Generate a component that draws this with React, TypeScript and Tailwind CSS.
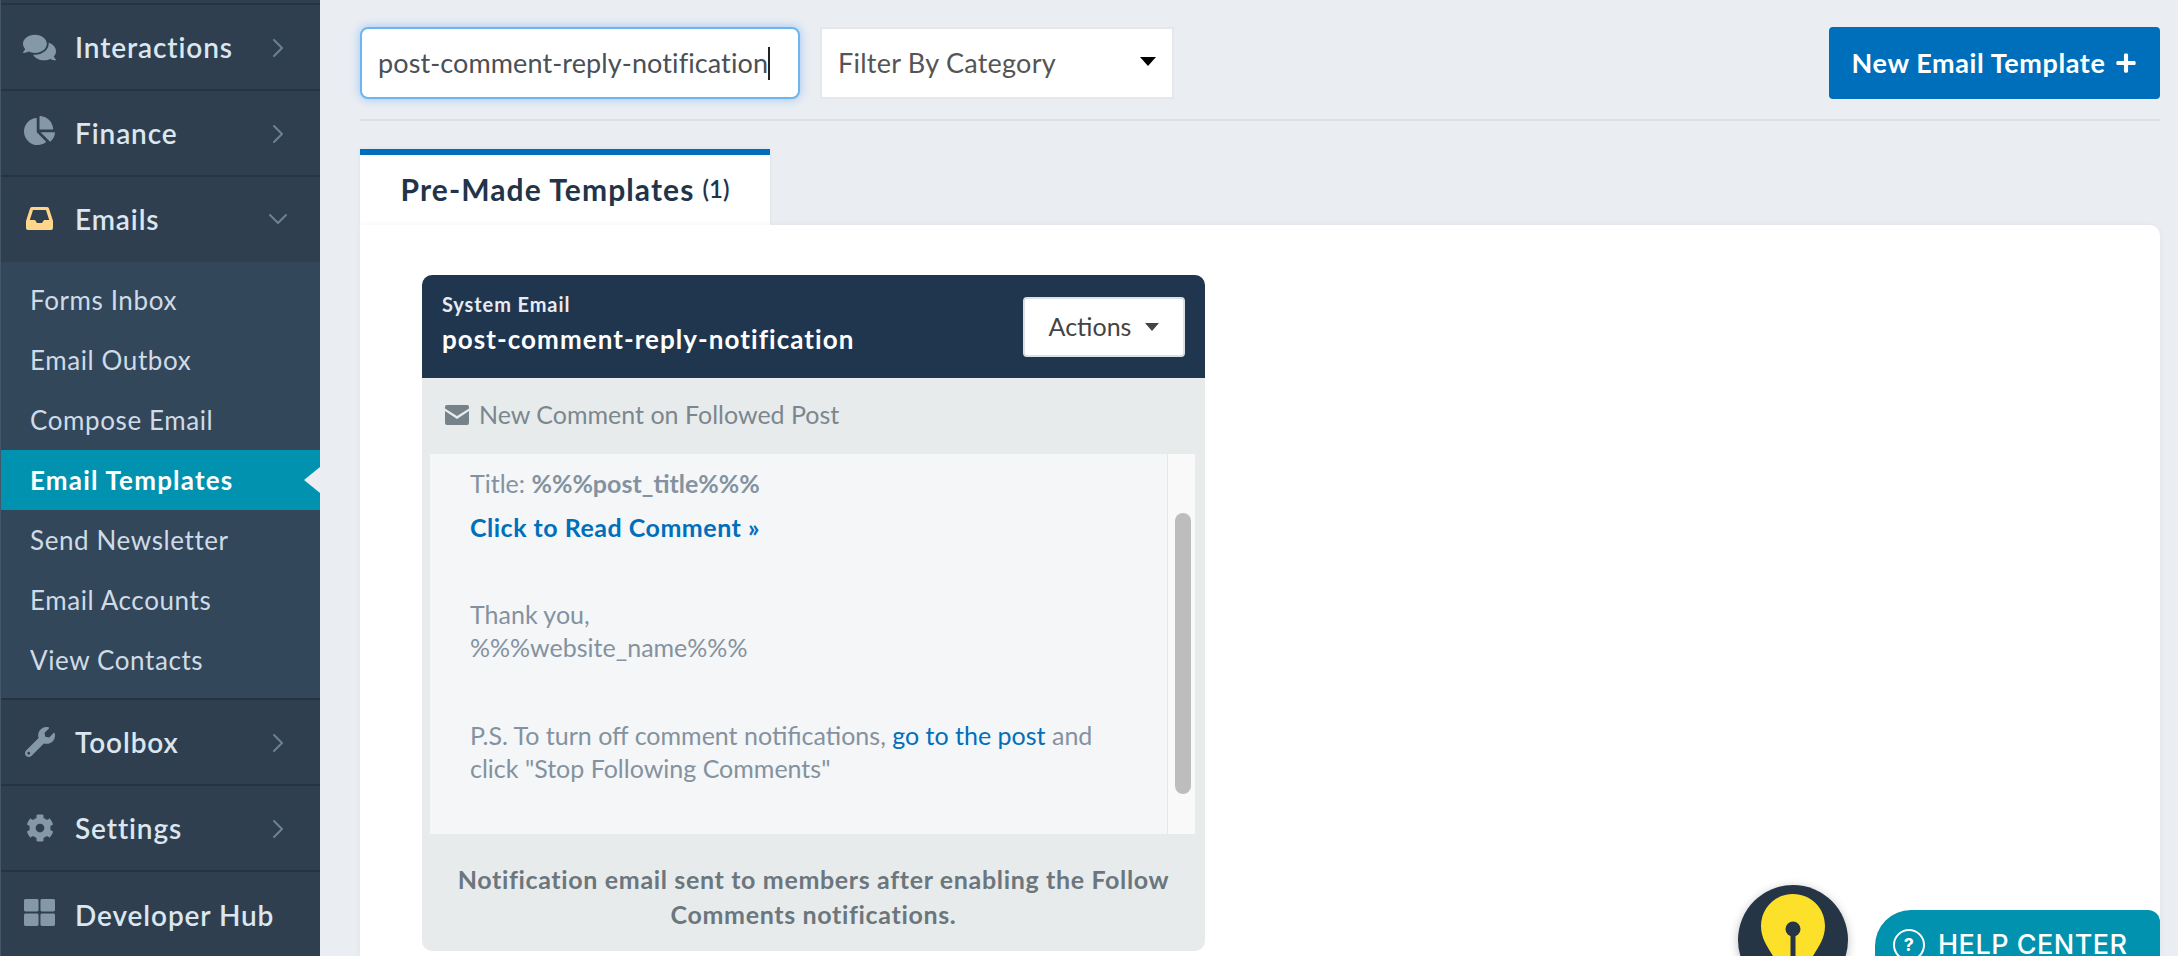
import React from 'react';
import { ChevronRight, ChevronDown } from 'lucide-react';
import { FaComments, FaChartPie, FaWrench, FaCog, FaThLarge, FaPlus } from 'react-icons/fa';

const font = "font-['Lato','Open_Sans',sans-serif]";

const subItems = ['Forms Inbox', 'Email Outbox', 'Compose Email', 'Email Templates', 'Send Newsletter', 'Email Accounts', 'View Contacts'];

const InboxIcon = () => (
  <svg viewBox="0 0 27 23" className="w-[27px] h-[23px] fill-[#fdd58b]">
    <path
      fillRule="evenodd"
      d="M6 0h15a2 2 0 0 1 2 1.4L27 14v7a2 2 0 0 1-2 2H2a2 2 0 0 1-2-2v-7L4 1.4A2 2 0 0 1 6 0zM7 3L3.8 13H9l2 3h5l2-3h5.200L20 3z"
    />
  </svg>
);

const NavRow = ({ icon, label, chevron = true, border = true }: any) => (
  <div className={`h-[86px] flex items-center relative ${border ? 'border-b-2 border-[#263442]' : ''}`}>
    <div className="w-[74px] flex justify-center pl-[12px] pr-[9px] text-[#8598a8]">{icon}</div>
    <span className="text-[28px] font-semibold text-[#dbe6ef] tracking-[0.9px]">{label}</span>
    {chevron && (
      <div className="absolute left-[261px] top-[27px] text-[#6f8292]">
        <ChevronRight size={32} strokeWidth={1.5} />
      </div>
    )}
  </div>
);

const Sidebar = () => (
  <aside className="w-[320px] shrink-0 bg-[#2f3f50] border-l border-[#43566a]">
    <div className="h-[5px] border-b-2 border-[#263442]" />
    <NavRow icon={<FaComments className="text-[33px]" />} label="Interactions" />
    <NavRow icon={<FaChartPie className="text-[31px] -mt-[5px]" />} label="Finance" />
    <div className="h-[85px] flex items-center relative">
      <div className="w-[74px] flex justify-center pl-[12px] pr-[9px] -mt-[2px]">
        <InboxIcon />
      </div>
      <span className="text-[28px] font-semibold text-[#dbe6ef] tracking-[0.9px] -mt-[1px]">Emails</span>
      <div className="absolute left-[261px] top-[26px] text-[#6f8292]">
        <ChevronDown size={32} strokeWidth={1.5} />
      </div>
    </div>
    <div className="bg-[#33475b] pt-[8px] pb-[8px] border-b-2 border-[#263442] h-[438px]">
      {subItems.map((item) =>
        item === 'Email Templates' ? (
          <div key={item} className="h-[60px] flex items-center pl-[29px] bg-[#0092ae] text-white font-bold text-[26px] tracking-[1.2px] relative">
            {item}
            <span className="absolute right-0 top-[17px] border-y-[13px] border-y-transparent border-r-[16px] border-r-[#eaedf2]" />
          </div>
        ) : (
          <div key={item} className="h-[60px] flex items-center pl-[29px] text-[#cfdbe6] text-[26px] tracking-[0.6px]">
            {item}
          </div>
        )
      )}
    </div>
    <NavRow icon={<FaWrench className="text-[30px]" />} label="Toolbox" />
    <NavRow icon={<FaCog className="text-[28px]" />} label="Settings" />
    <NavRow border={false} chevron={false} icon={<FaThLarge className="text-[31px] -mt-[5px]" />} label="Developer Hub" />
  </aside>
);

const Toolbar = () => (
  <div className="flex items-start pt-[27px] pb-[20px] border-b-2 border-[#dddfe3]">
    <div className="w-[440px] h-[72px] flex items-center pl-[16px] bg-white border-2 border-[#6db5ee] rounded-[8px] shadow-[0_0_10px_rgba(0,123,255,0.35)] text-[27px] tracking-[0.1px] text-[#495057]">
      post-comment-reply-notification
      <span className="w-[1.5px] h-[33px] bg-[#222]" />
    </div>
    <div className="ml-[20px] w-[354px] h-[72px] flex items-center justify-between pl-[16px] pr-[16px] bg-white border-2 border-[#e6e7ea] text-[27px] tracking-[0.25px] text-[#555]">
      Filter By Category
      <span className="border-x-[8px] border-x-transparent border-t-[9px] border-t-black -mt-[4px]" />
    </div>
    <button className="ml-auto w-[331px] h-[72px] flex items-center justify-center gap-[10px] bg-[#006fbb] rounded-[4px] text-white font-bold text-[27px] tracking-[0.6px]">
      New Email Template
      <FaPlus className="text-[22px]" />
    </button>
  </div>
);

const EnvelopeIcon = () => (
  <svg viewBox="0 0 24 20" className="w-[24px] h-[20px] fill-[#75828a]">
    <path d="M2 0h20a2 2 0 0 1 2 2v1.500L12 11 0 3.500V2a2 2 0 0 1 2-2zM0 6l12 8 12-8v12a2 2 0 0 1-2 2H2a2 2 0 0 1-2-2z" />
  </svg>
);

const TemplateCard = () => (
  <div className="w-[783px] rounded-[10px] overflow-hidden bg-[#e8ebec]">
    <div className="h-[103px] bg-[#20364f] flex items-center justify-between pl-[20px] pr-[20px]">
      <div className="pb-[6px]">
        <div className="text-[20px] font-bold text-[#e6ecf2] leading-[30px] tracking-[0.9px]">System Email</div>
        <div className="text-[26px] font-bold text-white leading-[40px] tracking-[1.05px]">post-comment-reply-notification</div>
      </div>
      <div className="w-[162px] h-[60px] flex items-center justify-center gap-[14px] bg-white border-2 border-[#dcdfe3] rounded-[4px] text-[25px] text-[#444]">
        Actions
        <span className="border-x-[7px] border-x-transparent border-t-[8px] border-t-[#444]" />
      </div>
    </div>
    <div className="h-[76px] flex items-center gap-[10px] pl-[23px] pb-[3px] text-[25px] text-[#7b878e]">
      <EnvelopeIcon />
      New Comment on Followed Post
    </div>
    <div className="h-[380px] ml-[8px] mr-[10px] flex bg-[#f4f6f8]">
      <div className="flex-1 pl-[40px] pr-[60px] pt-[13px] text-[25px] leading-[33px] text-[#84929f]">
        <p>
          Title: <b className="font-bold">%%%post_title%%%</b>
        </p>
        <p className="mt-[11px] font-bold tracking-[0.5px] text-[#006fbb]">Click to Read Comment »</p>
        <p className="mt-[54px]">
          Thank you,
          <br />
          %%%website_name%%%
        </p>
        <p className="mt-[55px]">
          P.S. To turn off comment notifications, <span className="text-[#006fbb]">go to the post</span> and click "Stop Following Comments"
        </p>
      </div>
      <div className="w-[28px] bg-[#f9f9fa] border-l border-[#e4e6e9] pt-[59px] pl-[7px]">
        <div className="w-[16px] h-[281px] rounded-full bg-[#bdbdbd]" />
      </div>
    </div>
    <div className="h-[117px] px-[20px] pt-[28px] text-center text-[25px] leading-[35px] font-bold tracking-[0.65px] text-[#6b767d]">
      Notification email sent to members after enabling the Follow Comments notifications.
    </div>
  </div>
);

const HelpWidget = () => (
  <div className="absolute right-[18px] top-[885px] flex items-start">
    <div className="w-[110px] h-[110px] rounded-full bg-[#263545] shadow-[0_2px_10px_rgba(0,0,0,0.25)] flex justify-center pt-[9px]">
      <svg viewBox="0 0 64 90" className="w-[64px] h-[90px]">
        <path d="M32 0C14 0 0 14 0 32c0 12 6 20 12 30l8 18h24l8-18c6-10 12-18 12-30C64 14 50 0 32 0z" fill="#fde02a" />
        <circle cx="32" cy="35" r="7.500" fill="#263545" />
        <rect x="29.500" y="36" width="5" height="50" fill="#263545" />
      </svg>
    </div>
    <div className="ml-[27px] mt-[25px] w-[285px] h-[80px] bg-[#0092ae] rounded-l-[36px] rounded-r-[12px] flex items-start pl-[18px] pt-[19px] gap-[13px] text-white font-['Inter',sans-serif] font-medium text-[27px] leading-[32px] tracking-[0.5px]">
      <span className="w-[32px] h-[32px] rounded-full border-2 border-white flex items-center justify-center text-[18px] font-bold leading-none">?</span>
      HELP CENTER
    </div>
  </div>
);

export default function App() {
  return (
    <div className={`${font} relative h-[956px] w-[2178px] overflow-hidden flex bg-[#eaedf2]`}>
      <Sidebar />
      <main className="flex-1 pl-[40px] pr-[18px] flex flex-col">
        <Toolbar />
        <div className="mt-[28px] w-[410px] h-[76px] bg-white border-t-[6px] border-[#006fbb] flex items-center justify-center gap-[8px] pb-[2px] text-[#22344a] shadow-[0_0_4px_rgba(0,0,0,0.06)]">
          <span className="text-[30px] font-bold tracking-[1.1px]">Pre-Made Templates</span>
          <span className="text-[24px] font-semibold">(1)</span>
        </div>
        <div className="flex-1 bg-white rounded-tr-[10px] pl-[62px] pt-[50px] shadow-[0_0_6px_rgba(0,0,0,0.05)]">
          <TemplateCard />
        </div>
      </main>
      <HelpWidget />
    </div>
  );
}
